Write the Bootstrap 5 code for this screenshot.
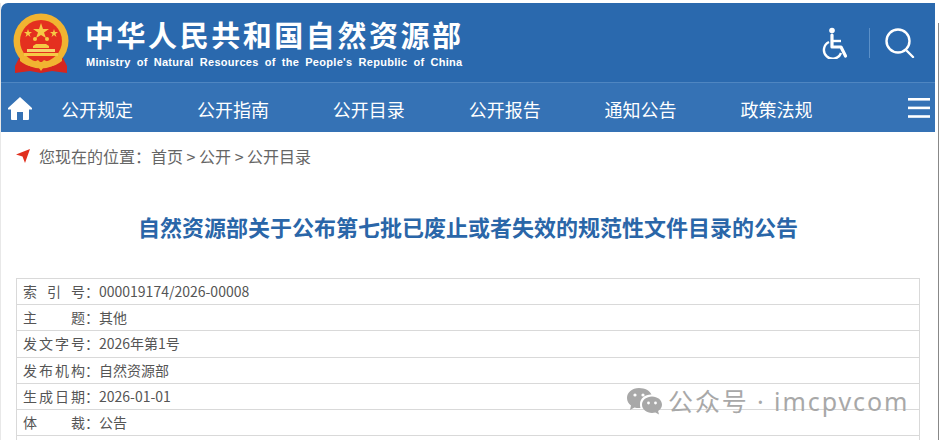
<!DOCTYPE html>
<html lang="zh-CN">
<head>
  <meta charset="UTF-8" />
  <title>公开目录</title>
  <link href="https://cdn.jsdelivr.net/npm/bootstrap@5.3.0/dist/css/bootstrap.min.css" rel="stylesheet">
  <style>
    html, body { height: 440px; overflow: hidden; }
    body {
      background: #fff;
      font-family: "Noto Sans CJK SC", "Noto Sans", sans-serif;
      color: #555;
      position: relative;
    }
    .page-wrap {
      margin-top: 3px;
      width: 935px;
      height: 437px;
      overflow: hidden;
      border-left: 1px solid #e8e8e8;
    }
    .site-head {
      height: 80px;
      background: #2a69ae;
      border-top-left-radius: 7px;
      border-bottom: 1px solid #4f86c1;
      color: #fff;
      padding-left: 11px;
    }
    .site-logo { margin-top: 2px; }
    .site-name {
      font-size: 29px;
      font-weight: 700;
      line-height: 34px;
      letter-spacing: 2.55px;
      white-space: nowrap;
      margin: 1px 0 0 -1px;
    }
    .site-en {
      font-family: "Liberation Sans", sans-serif;
      font-size: 11px;
      font-weight: 700;
      line-height: 14px;
      margin-top: 4px;
      word-spacing: 2.7px;
      letter-spacing: .3px;
      white-space: nowrap;
    }
    .head-tools { padding-right: 20px; gap: 19px; }
    .head-split { width: 1px; height: 30px; background: #5b90c8; margin: 0 -4px 0 1px; }
    .site-nav { height: 49px; background: #3572b5; color: #fff; padding: 0 5px 0 7px; }
    .nav-home { width: 53px; }
    .nav-item-x {
      width: 135.9px;
      font-size: 18px;
      padding-top: 3px;
      color: #fff;
      text-decoration: none;
      white-space: nowrap;
    }
    .crumb { font-size: 16px; color: #666; padding: 13px 0 0 15px; line-height: 22px; }
    .crumb-text { margin-left: 9px; }
    .doc-title {
      font-size: 22px;
      font-weight: 700;
      color: #2a66a8;
      text-align: center;
      line-height: 30px;
      margin: 44px 0 37px;
    }
    .meta-box { margin-left: 15px; width: 904px; border: 1px solid #d9d9d9; border-bottom: 0; }
    .meta-row {
      height: 26.2px;
      border-bottom: 1px solid #d9d9d9;
      font-size: 14px;
      color: #555;
      padding-left: 6px;
    }
    .meta-key { width: 76px; }
    .watermark {
      position: absolute;
      left: 626px;
      top: 384px;
      color: #a8a8a8;
      font-family: "Noto Sans", "Noto Sans CJK SC", sans-serif;
      font-size: 25px;
      line-height: 34px;
      letter-spacing: 1.9px;
      white-space: nowrap;
    }
    .watermark svg { margin-right: 6px; }
    .edge-line { position: absolute; right: 0; top: 23px; bottom: 0; width: 1px; background: #888; }
  </style>
</head>
<body>
  <div class="page-wrap">
    <header class="site-head d-flex align-items-center">
      <svg width="58" height="62" viewBox="0 0 58 62" class="site-logo flex-shrink-0 me-3">
        <path d="M8 43 L3 53 L3 60 L18 58 L29 60 L40 58 L55 60 L55 53 L50 43 Z" fill="#d6261f"/>
        <circle cx="29" cy="28" r="27.5" fill="#f1b431"/>
        <circle cx="29" cy="28" r="21" fill="#e4301f"/>
        <polygon points="29,10 31,16 37,16 32,19.500 34,25 29,22 24,25 26,19.500 21,16 27,16" fill="#f6c945"/>
        <polygon points="16,16 17,19 20,19 17.500,21 18.500,24 16,22 13.500,24 14.500,21 12,19 15,19" fill="#f6c945"/>
        <polygon points="42,16 43,19 46,19 43.500,21 44.500,24 42,22 39.500,24 40.500,21 38,19 41,19" fill="#f6c945"/>
        <circle cx="23" cy="26" r="2" fill="#f6c945"/>
        <circle cx="35" cy="26" r="2" fill="#f6c945"/>
        <path d="M21 35h16v-2l-3-2h-10l-3 2z" fill="#f6c945"/>
        <rect x="15" y="36" width="28" height="3" fill="#f6d36b"/>
        <rect x="12" y="40" width="34" height="3" fill="#f6c945"/>
        <path d="M8 44 Q18 52 26 47 L29 50 L32 47 Q40 52 50 44 L50 48 Q40 56 33 52 L29 58 L25 52 Q18 56 8 48 Z" fill="#f1b431"/>
      </svg>
      <div class="flex-grow-1">
        <div class="site-name">中华人民共和国自然资源部</div>
        <div class="site-en">Ministry of Natural Resources of the People's Republic of China</div>
      </div>
      <div class="head-tools d-flex align-items-center">
        <svg width="28" height="32" viewBox="0 0 28 32" fill="none" stroke="#fff" stroke-width="2.400">
          <circle cx="11" cy="3.500" r="2.800" fill="#fff" stroke="none"/>
          <path d="M11 8v12h9l4.500 9" stroke-width="3.200" stroke-linecap="round" stroke-linejoin="round"/>
          <path d="M11 14h9" stroke-width="2.400"/>
          <path d="M8 15a8.800 8.800 0 1 0 12 11"/>
        </svg>
        <span class="head-split"></span>
        <svg width="30" height="30" viewBox="0 0 30 30" fill="none" stroke="#fff">
          <circle cx="13" cy="13" r="11.500" stroke-width="2.400"/>
          <path d="M22 23l6 6" stroke-width="2.400" stroke-linecap="round"/>
        </svg>
      </div>
    </header>
    <nav class="site-nav d-flex align-items-center">
      <a class="nav-home d-block" href="#">
        <svg width="24" height="24" viewBox="0 0 24 24" fill="#fff" class="d-block">
          <path d="M12 1 L24 12 L24 13.500 L21 13.500 L21 23 Q21 24 20 24 L15 24 L15 16 L9 16 L9 24 L4 24 Q3 24 3 23 L3 13.500 L0 13.500 L0 12 Z"/>
        </svg>
      </a>
      <a class="nav-item-x" href="#">公开规定</a>
      <a class="nav-item-x" href="#">公开指南</a>
      <a class="nav-item-x" href="#">公开目录</a>
      <a class="nav-item-x" href="#">公开报告</a>
      <a class="nav-item-x" href="#">通知公告</a>
      <a class="nav-item-x" href="#">政策法规</a>
      <svg width="22" height="20" viewBox="0 0 22 20" fill="#fff" class="ms-auto flex-shrink-0">
        <rect y="0" width="22" height="2.600"/>
        <rect y="8.600" width="22" height="2.600"/>
        <rect y="17.200" width="22" height="2.600"/>
      </svg>
    </nav>
    <div class="crumb d-flex align-items-center">
      <svg width="14" height="14" viewBox="0 0 14 14" fill="#e0301e"><path d="M14 0 L0 5.500 L6.500 7.500 L9 14 Z"/></svg>
      <span class="crumb-text">您现在的位置：首页 &gt; 公开 &gt; 公开目录</span>
    </div>
    <h1 class="doc-title">自然资源部关于公布第七批已废止或者失效的规范性文件目录的公告</h1>
    <div class="meta-box">
      <div class="meta-row d-flex align-items-center"><span class="meta-key d-flex justify-content-between"><span>索</span><span>引</span><span>号：</span></span><span>000019174/2026-00008</span></div>
      <div class="meta-row d-flex align-items-center"><span class="meta-key d-flex justify-content-between"><span>主</span><span>题：</span></span><span>其他</span></div>
      <div class="meta-row d-flex align-items-center"><span class="meta-key d-flex justify-content-between"><span>发</span><span>文</span><span>字</span><span>号：</span></span><span>2026年第1号</span></div>
      <div class="meta-row d-flex align-items-center"><span class="meta-key d-flex justify-content-between"><span>发</span><span>布</span><span>机</span><span>构：</span></span><span>自然资源部</span></div>
      <div class="meta-row d-flex align-items-center"><span class="meta-key d-flex justify-content-between"><span>生</span><span>成</span><span>日</span><span>期：</span></span><span>2026-01-01</span></div>
      <div class="meta-row d-flex align-items-center"><span class="meta-key d-flex justify-content-between"><span>体</span><span>裁：</span></span><span>公告</span></div>
      <div class="meta-row"></div>
    </div>
  </div>
  <div class="watermark d-flex align-items-center">
    <svg width="36" height="28" viewBox="0 0 36 28" fill="#a8a8a8">
      <path d="M13 1C6 1 1 5.500 1 11c0 3 1.500 5.600 4 7.500L4 23l4.500-2.500c1.400.4 3 .6 4.500.6.500 0 1 0 1.500-.1C14 19.500 14 18 14 17c0-5.500 5-9.500 11-9.500h.5C24 3.800 19 1 13 1z"/>
      <path d="M26 9.500c-5.500 0-10 3.600-10 8.200s4.500 8.200 10 8.200c1.200 0 2.300-.2 3.400-.5l3.600 2-.9-3.500c2.400-1.500 3.900-3.700 3.900-6.200 0-4.600-4.500-8.200-10-8.200z"/>
      <circle cx="9" cy="8" r="1.600" fill="#fff"/><circle cx="17" cy="8" r="1.600" fill="#fff"/>
      <circle cx="22.500" cy="16" r="1.400" fill="#fff"/><circle cx="29.500" cy="16" r="1.400" fill="#fff"/>
    </svg>
    <span>公众号 · imcpvcom</span>
  </div>
  <span class="edge-line"></span>
</body>
</html>
